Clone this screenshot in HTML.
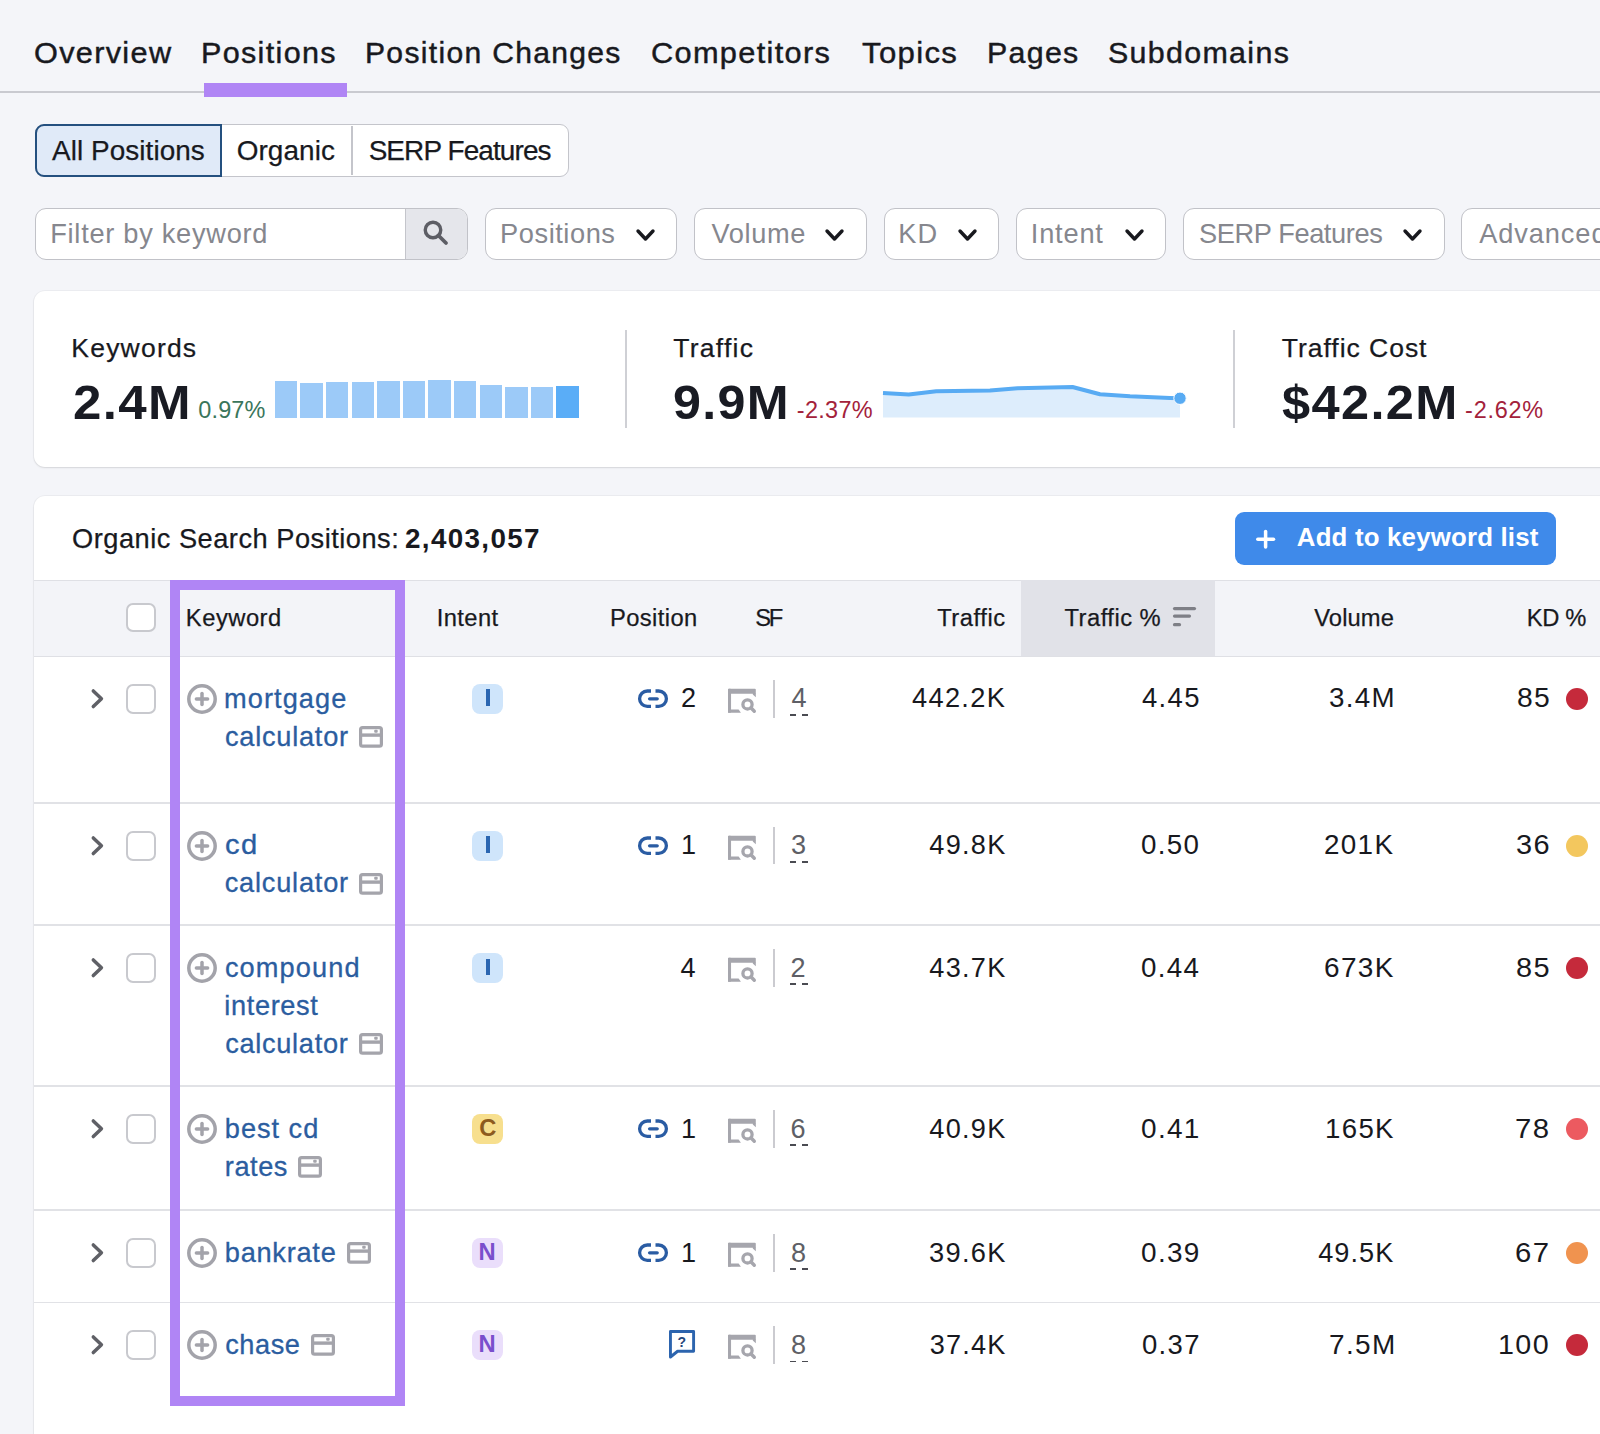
<!DOCTYPE html>
<html><head><meta charset="utf-8"><style>
html,body{margin:0;padding:0}
body{width:1600px;height:1434px;overflow:hidden;position:relative;background:#f4f5f9;font-family:"Liberation Sans",sans-serif}
.a{position:absolute;display:block}
.t{position:absolute;white-space:pre;line-height:normal}
</style></head><body>
<div class="a" style="left:0;top:91px;width:1600px;height:2px;background:#c9cad0"></div>
<div class="a" style="left:204px;top:83px;width:143px;height:14px;background:#b085f5"></div>
<div class="a" style="left:34.5px;top:124.2px;width:534.5px;height:52.6px;border:1.6px solid #c4c5cb;border-radius:9px;background:#fff;box-sizing:border-box"></div>
<div class="a" style="left:34.5px;top:124.2px;width:187.5px;height:52.6px;border:2px solid #24507f;border-radius:9px 0 0 9px;background:#e0eaf8;box-sizing:border-box"></div>
<div class="a" style="left:351.3px;top:125.5px;width:1.6px;height:49.5px;background:#c4c5cb"></div>
<div class="a" style="left:35px;top:208.3px;width:433px;height:52px;border:1.6px solid #c1c2c8;border-radius:11px;background:#fff;box-sizing:border-box;overflow:hidden"><div style="position:absolute;left:369px;top:0;width:70px;height:100%;background:#e5e6eb;border-left:1.5px solid #c4c5cb"></div></div>
<svg class="a" style="left:419.5px;top:217.3px" width="32" height="32" viewBox="0 0 32 32"><circle cx="13" cy="13" r="7.75" fill="none" stroke="#5d5e65" stroke-width="3.4"/><line x1="18.5" y1="18.5" x2="26" y2="26" stroke="#5d5e65" stroke-width="3.8" stroke-linecap="round"/></svg>
<div class="a" style="left:484.7px;top:208.3px;width:192.50000000000006px;height:52px;border:1.6px solid #c1c2c8;border-radius:11px;background:#fff;box-sizing:border-box"></div>
<svg class="a" style="left:635.25px;top:227px" width="22" height="17" viewBox="0 0 22 17"><polyline points="3,4 10.5,12 18,4" fill="none" stroke="#18191e" stroke-width="3.4" stroke-linecap="round" stroke-linejoin="round"/></svg>
<div class="a" style="left:694px;top:208.3px;width:172.60000000000002px;height:52px;border:1.6px solid #c1c2c8;border-radius:11px;background:#fff;box-sizing:border-box"></div>
<svg class="a" style="left:824.25px;top:227px" width="22" height="17" viewBox="0 0 22 17"><polyline points="3,4 10.5,12 18,4" fill="none" stroke="#18191e" stroke-width="3.4" stroke-linecap="round" stroke-linejoin="round"/></svg>
<div class="a" style="left:883.7px;top:208.3px;width:115.5px;height:52px;border:1.6px solid #c1c2c8;border-radius:11px;background:#fff;box-sizing:border-box"></div>
<svg class="a" style="left:956.6px;top:227px" width="22" height="17" viewBox="0 0 22 17"><polyline points="3,4 10.5,12 18,4" fill="none" stroke="#18191e" stroke-width="3.4" stroke-linecap="round" stroke-linejoin="round"/></svg>
<div class="a" style="left:1015.75px;top:208.3px;width:149.95000000000005px;height:52px;border:1.6px solid #c1c2c8;border-radius:11px;background:#fff;box-sizing:border-box"></div>
<svg class="a" style="left:1123.9px;top:227px" width="22" height="17" viewBox="0 0 22 17"><polyline points="3,4 10.5,12 18,4" fill="none" stroke="#18191e" stroke-width="3.4" stroke-linecap="round" stroke-linejoin="round"/></svg>
<div class="a" style="left:1182.6px;top:208.3px;width:262.4000000000001px;height:52px;border:1.6px solid #c1c2c8;border-radius:11px;background:#fff;box-sizing:border-box"></div>
<svg class="a" style="left:1402px;top:227px" width="22" height="17" viewBox="0 0 22 17"><polyline points="3,4 10.5,12 18,4" fill="none" stroke="#18191e" stroke-width="3.4" stroke-linecap="round" stroke-linejoin="round"/></svg>
<div class="a" style="left:1461.2px;top:208.3px;width:238.79999999999995px;height:52px;border:1.6px solid #c1c2c8;border-radius:11px;background:#fff;box-sizing:border-box"></div>
<div class="a" style="left:34px;top:291px;width:1600px;height:176px;background:#fff;border-radius:11px;box-shadow:0 1px 2px rgba(0,0,0,0.10),0 0 0 1px rgba(0,0,0,0.03)"></div>
<div class="a" style="left:274.5px;top:381.25px;width:22.5px;height:36.25px;background:#9ccaf8"></div>
<div class="a" style="left:300px;top:382.5px;width:22.5px;height:35.0px;background:#9ccaf8"></div>
<div class="a" style="left:325.75px;top:382px;width:22.5px;height:35.5px;background:#9ccaf8"></div>
<div class="a" style="left:351.5px;top:381.5px;width:22.5px;height:36.0px;background:#9ccaf8"></div>
<div class="a" style="left:377px;top:381px;width:22.5px;height:36.5px;background:#9ccaf8"></div>
<div class="a" style="left:402.75px;top:380.75px;width:22.5px;height:36.75px;background:#9ccaf8"></div>
<div class="a" style="left:428.25px;top:380px;width:22.5px;height:37.5px;background:#9ccaf8"></div>
<div class="a" style="left:453.75px;top:380.5px;width:22.5px;height:37.0px;background:#9ccaf8"></div>
<div class="a" style="left:479.5px;top:384.75px;width:22.5px;height:32.75px;background:#9ccaf8"></div>
<div class="a" style="left:505px;top:386.5px;width:22.5px;height:31.0px;background:#9ccaf8"></div>
<div class="a" style="left:530.75px;top:386.5px;width:22.5px;height:31.0px;background:#9ccaf8"></div>
<div class="a" style="left:556.25px;top:386px;width:22.5px;height:31.5px;background:#5aadf7"></div>
<div class="a" style="left:624.5px;top:329.5px;width:2px;height:98px;background:#cfd0d5"></div>
<div class="a" style="left:1233.3px;top:330px;width:2px;height:98px;background:#cfd0d5"></div>
<svg class="a" style="left:870px;top:370px" width="330" height="60" viewBox="0 0 330 60"><polygon points="13,23 38.75,24.5 66.25,21.25 120,20.5 147.5,18.25 202.5,17 230,24.25 260,26.25 300,28 310,28.25 310,47.5 13,47.5" fill="#ddedfc"/><polyline points="13,23 38.75,24.5 66.25,21.25 120,20.5 147.5,18.25 202.5,17 230,24.25 260,26.25 300,28 310,28.25" fill="none" stroke="#58abf3" stroke-width="4.2" stroke-linejoin="round"/><circle cx="310" cy="28.25" r="6.2" fill="#58abf3" stroke="#fff" stroke-width="1"/></svg>
<div class="a" style="left:33.5px;top:496px;width:1600px;height:1000px;background:#fff;border-radius:11px;box-shadow:0 1px 2px rgba(0,0,0,0.08),0 0 0 1px rgba(0,0,0,0.035)"></div>
<div class="a" style="left:1235.4px;top:512.4px;width:320.2px;height:52.4px;background:#3f8aea;border-radius:9px"></div>
<svg class="a" style="left:1254px;top:528px" width="23" height="23" viewBox="0 0 23 23"><line x1="11.6" y1="3.4" x2="11.6" y2="19.1" stroke="#fff" stroke-width="3.5" stroke-linecap="round"/><line x1="3.8" y1="11.3" x2="19.5" y2="11.3" stroke="#fff" stroke-width="3.5" stroke-linecap="round"/></svg>
<div class="a" style="left:34px;top:579.5px;width:1600px;height:77px;background:#f3f4f8;border-top:1.5px solid #dfe0e5;border-bottom:1.5px solid #dfe0e5;box-sizing:border-box"></div>
<div class="a" style="left:1021.2px;top:579.5px;width:193.6px;height:76px;background:#e1e2e8"></div>
<svg class="a" style="left:1170px;top:604px" width="30" height="26" viewBox="0 0 30 26"><line x1="4.5" y1="4.6" x2="24.5" y2="4.6" stroke="#7e7f86" stroke-width="3.2" stroke-linecap="round"/><line x1="4.5" y1="12.1" x2="19.5" y2="12.1" stroke="#7e7f86" stroke-width="3.2" stroke-linecap="round"/><line x1="4.5" y1="20.7" x2="9.5" y2="20.7" stroke="#7e7f86" stroke-width="3.2" stroke-linecap="round"/></svg>
<div class="a" style="left:126.3px;top:602.5px;width:29.9px;height:29.9px;border:2px solid #c8c9ce;border-radius:7px;background:#fff;box-sizing:border-box"></div>
<div class="a" style="left:34px;top:802.05px;width:1600px;height:1.5px;background:#e1e2e6"></div>
<svg class="a" style="left:88px;top:686px" width="20" height="26" viewBox="0 0 20 26"><polyline points="5.3,4.9 13.45,12.65 5.3,20.6" fill="none" stroke="#5f6066" stroke-width="3.5" stroke-linecap="round" stroke-linejoin="round"/></svg>
<div class="a" style="left:126px;top:683.9px;width:29.9px;height:29.9px;border:2px solid #c8c9ce;border-radius:7px;background:#fff;box-sizing:border-box"></div>
<svg class="a" style="left:186.87px;top:683.8px" width="30" height="30" viewBox="0 0 30 30"><circle cx="15" cy="15" r="13.2" fill="none" stroke="#a3a3aa" stroke-width="3.5"/><line x1="15" y1="9.4" x2="15" y2="20.6" stroke="#a3a3aa" stroke-width="3.5" stroke-linecap="round"/><line x1="9.4" y1="15" x2="20.6" y2="15" stroke="#a3a3aa" stroke-width="3.5" stroke-linecap="round"/></svg>
<svg class="a" style="left:359.3px;top:726.0px" width="24" height="22" viewBox="0 0 24 22"><rect x="1.6" y="1.6" width="20.8" height="18.6" rx="2" fill="none" stroke="#a4a4ab" stroke-width="3.2"/><rect x="1" y="7.4" width="22" height="3.4" fill="#a4a4ab"/><rect x="15.2" y="3.8" width="3.5" height="3" rx="1" fill="#a4a4ab"/></svg>
<div class="a" style="left:472.3px;top:683.7px;width:30.5px;height:30px;background:#cfe5fb;border-radius:8px"></div>
<div class="a" style="left:486.3px;top:689.4px;width:3.5px;height:16.7px;background:#2b66b1"></div>
<svg class="a" style="left:634px;top:684px" width="40" height="30" viewBox="0 0 40 30"><path d="M17 7 H13.3 A7.7 7.7 0 0 0 13.3 22.4 H17 M21.5 7 H24.7 A7.7 7.7 0 0 1 24.7 22.4 H21.5" fill="none" stroke="#2a5ca3" stroke-width="3.3"/><line x1="15.6" y1="14.8" x2="23.2" y2="14.8" stroke="#2a5ca3" stroke-width="3.3" stroke-linecap="round"/></svg>
<svg class="a" style="left:722px;top:682px" width="40" height="36" viewBox="0 0 40 36"><rect x="6" y="6.65" width="27.8" height="5.2" rx="1" fill="#a6a6ad"/><rect x="6" y="6.65" width="3.05" height="24.15" rx="0.8" fill="#a6a6ad"/><polygon points="6,27.6 16.6,27.6 18.9,30.8 6,30.8" fill="#a6a6ad"/><polygon points="30.8,11 33.8,11 33.8,15.2 30.8,12.6" fill="#a6a6ad"/><circle cx="25.5" cy="22.4" r="4.6" fill="none" stroke="#a6a6ad" stroke-width="3.3"/><line x1="28.9" y1="25.8" x2="32.3" y2="29.3" stroke="#a6a6ad" stroke-width="3.4" stroke-linecap="round"/></svg>
<div class="a" style="left:773.15px;top:680px;width:1.9px;height:37.7px;background:#cbcbd0"></div>
<div class="a" style="left:790.4px;top:714.2px;width:5.4px;height:1.8px;background:#4a4b52"></div>
<div class="a" style="left:802.1px;top:714.2px;width:5.6px;height:1.8px;background:#4a4b52"></div>
<div class="a" style="left:1566px;top:688px;width:22px;height:22px;border-radius:50%;background:#c52a3b"></div>
<div class="a" style="left:34px;top:924.45px;width:1600px;height:1.5px;background:#e1e2e6"></div>
<svg class="a" style="left:88px;top:832.8px" width="20" height="26" viewBox="0 0 20 26"><polyline points="5.3,4.9 13.45,12.65 5.3,20.6" fill="none" stroke="#5f6066" stroke-width="3.5" stroke-linecap="round" stroke-linejoin="round"/></svg>
<div class="a" style="left:126px;top:830.6999999999999px;width:29.9px;height:29.9px;border:2px solid #c8c9ce;border-radius:7px;background:#fff;box-sizing:border-box"></div>
<svg class="a" style="left:186.87px;top:830.5999999999999px" width="30" height="30" viewBox="0 0 30 30"><circle cx="15" cy="15" r="13.2" fill="none" stroke="#a3a3aa" stroke-width="3.5"/><line x1="15" y1="9.4" x2="15" y2="20.6" stroke="#a3a3aa" stroke-width="3.5" stroke-linecap="round"/><line x1="9.4" y1="15" x2="20.6" y2="15" stroke="#a3a3aa" stroke-width="3.5" stroke-linecap="round"/></svg>
<svg class="a" style="left:359.0px;top:872.8px" width="24" height="22" viewBox="0 0 24 22"><rect x="1.6" y="1.6" width="20.8" height="18.6" rx="2" fill="none" stroke="#a4a4ab" stroke-width="3.2"/><rect x="1" y="7.4" width="22" height="3.4" fill="#a4a4ab"/><rect x="15.2" y="3.8" width="3.5" height="3" rx="1" fill="#a4a4ab"/></svg>
<div class="a" style="left:472.3px;top:830.5px;width:30.5px;height:30px;background:#cfe5fb;border-radius:8px"></div>
<div class="a" style="left:486.3px;top:836.1999999999999px;width:3.5px;height:16.7px;background:#2b66b1"></div>
<svg class="a" style="left:634px;top:830.8px" width="40" height="30" viewBox="0 0 40 30"><path d="M17 7 H13.3 A7.7 7.7 0 0 0 13.3 22.4 H17 M21.5 7 H24.7 A7.7 7.7 0 0 1 24.7 22.4 H21.5" fill="none" stroke="#2a5ca3" stroke-width="3.3"/><line x1="15.6" y1="14.8" x2="23.2" y2="14.8" stroke="#2a5ca3" stroke-width="3.3" stroke-linecap="round"/></svg>
<svg class="a" style="left:722px;top:828.8px" width="40" height="36" viewBox="0 0 40 36"><rect x="6" y="6.65" width="27.8" height="5.2" rx="1" fill="#a6a6ad"/><rect x="6" y="6.65" width="3.05" height="24.15" rx="0.8" fill="#a6a6ad"/><polygon points="6,27.6 16.6,27.6 18.9,30.8 6,30.8" fill="#a6a6ad"/><polygon points="30.8,11 33.8,11 33.8,15.2 30.8,12.6" fill="#a6a6ad"/><circle cx="25.5" cy="22.4" r="4.6" fill="none" stroke="#a6a6ad" stroke-width="3.3"/><line x1="28.9" y1="25.8" x2="32.3" y2="29.3" stroke="#a6a6ad" stroke-width="3.4" stroke-linecap="round"/></svg>
<div class="a" style="left:773.15px;top:826.8px;width:1.9px;height:37.7px;background:#cbcbd0"></div>
<div class="a" style="left:790.4px;top:861.0px;width:5.4px;height:1.8px;background:#4a4b52"></div>
<div class="a" style="left:802.1px;top:861.0px;width:5.6px;height:1.8px;background:#4a4b52"></div>
<div class="a" style="left:1566px;top:834.8px;width:22px;height:22px;border-radius:50%;background:#f3c75e"></div>
<div class="a" style="left:34px;top:1085.45px;width:1600px;height:1.5px;background:#e1e2e6"></div>
<svg class="a" style="left:88px;top:955.2px" width="20" height="26" viewBox="0 0 20 26"><polyline points="5.3,4.9 13.45,12.65 5.3,20.6" fill="none" stroke="#5f6066" stroke-width="3.5" stroke-linecap="round" stroke-linejoin="round"/></svg>
<div class="a" style="left:126px;top:953.1px;width:29.9px;height:29.9px;border:2px solid #c8c9ce;border-radius:7px;background:#fff;box-sizing:border-box"></div>
<svg class="a" style="left:186.87px;top:953.0px" width="30" height="30" viewBox="0 0 30 30"><circle cx="15" cy="15" r="13.2" fill="none" stroke="#a3a3aa" stroke-width="3.5"/><line x1="15" y1="9.4" x2="15" y2="20.6" stroke="#a3a3aa" stroke-width="3.5" stroke-linecap="round"/><line x1="9.4" y1="15" x2="20.6" y2="15" stroke="#a3a3aa" stroke-width="3.5" stroke-linecap="round"/></svg>
<svg class="a" style="left:359.25px;top:1033.2px" width="24" height="22" viewBox="0 0 24 22"><rect x="1.6" y="1.6" width="20.8" height="18.6" rx="2" fill="none" stroke="#a4a4ab" stroke-width="3.2"/><rect x="1" y="7.4" width="22" height="3.4" fill="#a4a4ab"/><rect x="15.2" y="3.8" width="3.5" height="3" rx="1" fill="#a4a4ab"/></svg>
<div class="a" style="left:472.3px;top:952.9000000000001px;width:30.5px;height:30px;background:#cfe5fb;border-radius:8px"></div>
<div class="a" style="left:486.3px;top:958.6px;width:3.5px;height:16.7px;background:#2b66b1"></div>
<svg class="a" style="left:722px;top:951.2px" width="40" height="36" viewBox="0 0 40 36"><rect x="6" y="6.65" width="27.8" height="5.2" rx="1" fill="#a6a6ad"/><rect x="6" y="6.65" width="3.05" height="24.15" rx="0.8" fill="#a6a6ad"/><polygon points="6,27.6 16.6,27.6 18.9,30.8 6,30.8" fill="#a6a6ad"/><polygon points="30.8,11 33.8,11 33.8,15.2 30.8,12.6" fill="#a6a6ad"/><circle cx="25.5" cy="22.4" r="4.6" fill="none" stroke="#a6a6ad" stroke-width="3.3"/><line x1="28.9" y1="25.8" x2="32.3" y2="29.3" stroke="#a6a6ad" stroke-width="3.4" stroke-linecap="round"/></svg>
<div class="a" style="left:773.15px;top:949.2px;width:1.9px;height:37.7px;background:#cbcbd0"></div>
<div class="a" style="left:790.4px;top:983.4000000000001px;width:5.4px;height:1.8px;background:#4a4b52"></div>
<div class="a" style="left:802.1px;top:983.4000000000001px;width:5.6px;height:1.8px;background:#4a4b52"></div>
<div class="a" style="left:1566px;top:957.2px;width:22px;height:22px;border-radius:50%;background:#c52a3b"></div>
<div class="a" style="left:34px;top:1209.45px;width:1600px;height:1.5px;background:#e1e2e6"></div>
<svg class="a" style="left:88px;top:1116.2px" width="20" height="26" viewBox="0 0 20 26"><polyline points="5.3,4.9 13.45,12.65 5.3,20.6" fill="none" stroke="#5f6066" stroke-width="3.5" stroke-linecap="round" stroke-linejoin="round"/></svg>
<div class="a" style="left:126px;top:1114.1000000000001px;width:29.9px;height:29.9px;border:2px solid #c8c9ce;border-radius:7px;background:#fff;box-sizing:border-box"></div>
<svg class="a" style="left:186.87px;top:1114.0px" width="30" height="30" viewBox="0 0 30 30"><circle cx="15" cy="15" r="13.2" fill="none" stroke="#a3a3aa" stroke-width="3.5"/><line x1="15" y1="9.4" x2="15" y2="20.6" stroke="#a3a3aa" stroke-width="3.5" stroke-linecap="round"/><line x1="9.4" y1="15" x2="20.6" y2="15" stroke="#a3a3aa" stroke-width="3.5" stroke-linecap="round"/></svg>
<svg class="a" style="left:298.2px;top:1156.2px" width="24" height="22" viewBox="0 0 24 22"><rect x="1.6" y="1.6" width="20.8" height="18.6" rx="2" fill="none" stroke="#a4a4ab" stroke-width="3.2"/><rect x="1" y="7.4" width="22" height="3.4" fill="#a4a4ab"/><rect x="15.2" y="3.8" width="3.5" height="3" rx="1" fill="#a4a4ab"/></svg>
<div class="a" style="left:472.3px;top:1113.9px;width:30.5px;height:30px;background:#f7df8e;border-radius:8px"></div>
<svg class="a" style="left:634px;top:1114.2px" width="40" height="30" viewBox="0 0 40 30"><path d="M17 7 H13.3 A7.7 7.7 0 0 0 13.3 22.4 H17 M21.5 7 H24.7 A7.7 7.7 0 0 1 24.7 22.4 H21.5" fill="none" stroke="#2a5ca3" stroke-width="3.3"/><line x1="15.6" y1="14.8" x2="23.2" y2="14.8" stroke="#2a5ca3" stroke-width="3.3" stroke-linecap="round"/></svg>
<svg class="a" style="left:722px;top:1112.2px" width="40" height="36" viewBox="0 0 40 36"><rect x="6" y="6.65" width="27.8" height="5.2" rx="1" fill="#a6a6ad"/><rect x="6" y="6.65" width="3.05" height="24.15" rx="0.8" fill="#a6a6ad"/><polygon points="6,27.6 16.6,27.6 18.9,30.8 6,30.8" fill="#a6a6ad"/><polygon points="30.8,11 33.8,11 33.8,15.2 30.8,12.6" fill="#a6a6ad"/><circle cx="25.5" cy="22.4" r="4.6" fill="none" stroke="#a6a6ad" stroke-width="3.3"/><line x1="28.9" y1="25.8" x2="32.3" y2="29.3" stroke="#a6a6ad" stroke-width="3.4" stroke-linecap="round"/></svg>
<div class="a" style="left:773.15px;top:1110.2px;width:1.9px;height:37.7px;background:#cbcbd0"></div>
<div class="a" style="left:790.4px;top:1144.4px;width:5.4px;height:1.8px;background:#4a4b52"></div>
<div class="a" style="left:802.1px;top:1144.4px;width:5.6px;height:1.8px;background:#4a4b52"></div>
<div class="a" style="left:1566px;top:1118.2px;width:22px;height:22px;border-radius:50%;background:#ec5a60"></div>
<div class="a" style="left:34px;top:1301.55px;width:1600px;height:1.5px;background:#e1e2e6"></div>
<svg class="a" style="left:88px;top:1240.2px" width="20" height="26" viewBox="0 0 20 26"><polyline points="5.3,4.9 13.45,12.65 5.3,20.6" fill="none" stroke="#5f6066" stroke-width="3.5" stroke-linecap="round" stroke-linejoin="round"/></svg>
<div class="a" style="left:126px;top:1238.1000000000001px;width:29.9px;height:29.9px;border:2px solid #c8c9ce;border-radius:7px;background:#fff;box-sizing:border-box"></div>
<svg class="a" style="left:186.87px;top:1238.0px" width="30" height="30" viewBox="0 0 30 30"><circle cx="15" cy="15" r="13.2" fill="none" stroke="#a3a3aa" stroke-width="3.5"/><line x1="15" y1="9.4" x2="15" y2="20.6" stroke="#a3a3aa" stroke-width="3.5" stroke-linecap="round"/><line x1="9.4" y1="15" x2="20.6" y2="15" stroke="#a3a3aa" stroke-width="3.5" stroke-linecap="round"/></svg>
<svg class="a" style="left:347px;top:1242.2px" width="24" height="22" viewBox="0 0 24 22"><rect x="1.6" y="1.6" width="20.8" height="18.6" rx="2" fill="none" stroke="#a4a4ab" stroke-width="3.2"/><rect x="1" y="7.4" width="22" height="3.4" fill="#a4a4ab"/><rect x="15.2" y="3.8" width="3.5" height="3" rx="1" fill="#a4a4ab"/></svg>
<div class="a" style="left:472.3px;top:1237.9px;width:30.5px;height:30px;background:#eadefb;border-radius:8px"></div>
<svg class="a" style="left:634px;top:1238.2px" width="40" height="30" viewBox="0 0 40 30"><path d="M17 7 H13.3 A7.7 7.7 0 0 0 13.3 22.4 H17 M21.5 7 H24.7 A7.7 7.7 0 0 1 24.7 22.4 H21.5" fill="none" stroke="#2a5ca3" stroke-width="3.3"/><line x1="15.6" y1="14.8" x2="23.2" y2="14.8" stroke="#2a5ca3" stroke-width="3.3" stroke-linecap="round"/></svg>
<svg class="a" style="left:722px;top:1236.2px" width="40" height="36" viewBox="0 0 40 36"><rect x="6" y="6.65" width="27.8" height="5.2" rx="1" fill="#a6a6ad"/><rect x="6" y="6.65" width="3.05" height="24.15" rx="0.8" fill="#a6a6ad"/><polygon points="6,27.6 16.6,27.6 18.9,30.8 6,30.8" fill="#a6a6ad"/><polygon points="30.8,11 33.8,11 33.8,15.2 30.8,12.6" fill="#a6a6ad"/><circle cx="25.5" cy="22.4" r="4.6" fill="none" stroke="#a6a6ad" stroke-width="3.3"/><line x1="28.9" y1="25.8" x2="32.3" y2="29.3" stroke="#a6a6ad" stroke-width="3.4" stroke-linecap="round"/></svg>
<div class="a" style="left:773.15px;top:1234.2px;width:1.9px;height:37.7px;background:#cbcbd0"></div>
<div class="a" style="left:790.4px;top:1268.4px;width:5.4px;height:1.8px;background:#4a4b52"></div>
<div class="a" style="left:802.1px;top:1268.4px;width:5.6px;height:1.8px;background:#4a4b52"></div>
<div class="a" style="left:1566px;top:1242.2px;width:22px;height:22px;border-radius:50%;background:#f0934f"></div>
<svg class="a" style="left:88px;top:1332.3px" width="20" height="26" viewBox="0 0 20 26"><polyline points="5.3,4.9 13.45,12.65 5.3,20.6" fill="none" stroke="#5f6066" stroke-width="3.5" stroke-linecap="round" stroke-linejoin="round"/></svg>
<div class="a" style="left:126px;top:1330.2px;width:29.9px;height:29.9px;border:2px solid #c8c9ce;border-radius:7px;background:#fff;box-sizing:border-box"></div>
<svg class="a" style="left:186.87px;top:1330.1px" width="30" height="30" viewBox="0 0 30 30"><circle cx="15" cy="15" r="13.2" fill="none" stroke="#a3a3aa" stroke-width="3.5"/><line x1="15" y1="9.4" x2="15" y2="20.6" stroke="#a3a3aa" stroke-width="3.5" stroke-linecap="round"/><line x1="9.4" y1="15" x2="20.6" y2="15" stroke="#a3a3aa" stroke-width="3.5" stroke-linecap="round"/></svg>
<svg class="a" style="left:310.6px;top:1334.3px" width="24" height="22" viewBox="0 0 24 22"><rect x="1.6" y="1.6" width="20.8" height="18.6" rx="2" fill="none" stroke="#a4a4ab" stroke-width="3.2"/><rect x="1" y="7.4" width="22" height="3.4" fill="#a4a4ab"/><rect x="15.2" y="3.8" width="3.5" height="3" rx="1" fill="#a4a4ab"/></svg>
<div class="a" style="left:472.3px;top:1330.0px;width:30.5px;height:30px;background:#eadefb;border-radius:8px"></div>
<svg class="a" style="left:662px;top:1324.0px" width="40" height="40" viewBox="0 0 40 40"><path d="M8.45 33 V7.45 H31.6 V27.25 H15.6 Z" fill="none" stroke="#2c64ae" stroke-width="2.9" stroke-linejoin="round"/><text x="19.9" y="23.1" font-family="Liberation Sans" font-weight="bold" font-size="14" fill="#26477d" text-anchor="middle">?</text></svg>
<svg class="a" style="left:722px;top:1328.3px" width="40" height="36" viewBox="0 0 40 36"><rect x="6" y="6.65" width="27.8" height="5.2" rx="1" fill="#a6a6ad"/><rect x="6" y="6.65" width="3.05" height="24.15" rx="0.8" fill="#a6a6ad"/><polygon points="6,27.6 16.6,27.6 18.9,30.8 6,30.8" fill="#a6a6ad"/><polygon points="30.8,11 33.8,11 33.8,15.2 30.8,12.6" fill="#a6a6ad"/><circle cx="25.5" cy="22.4" r="4.6" fill="none" stroke="#a6a6ad" stroke-width="3.3"/><line x1="28.9" y1="25.8" x2="32.3" y2="29.3" stroke="#a6a6ad" stroke-width="3.4" stroke-linecap="round"/></svg>
<div class="a" style="left:773.15px;top:1326.3px;width:1.9px;height:37.7px;background:#cbcbd0"></div>
<div class="a" style="left:790.4px;top:1360.5px;width:5.4px;height:1.8px;background:#4a4b52"></div>
<div class="a" style="left:802.1px;top:1360.5px;width:5.6px;height:1.8px;background:#4a4b52"></div>
<div class="a" style="left:1566px;top:1334.3px;width:22px;height:22px;border-radius:50%;background:#c52a3b"></div>
<div class="a" style="left:170.3px;top:580.2px;width:235.2px;height:826.1px;border:10px solid #b085f5;box-sizing:border-box"></div>
<span class="t" style="left:33.56px;top:36.12px;font-size:30.03px;letter-spacing:1.300px;color:#18191e;transform:scaleX(1.0210);transform-origin:0 0;-webkit-text-stroke:0.45px #18191e;">Overview</span>
<span class="t" style="left:201.36px;top:36.12px;font-size:30.03px;letter-spacing:1.300px;color:#18191e;transform:scaleX(1.0178);transform-origin:0 0;-webkit-text-stroke:0.45px #18191e;">Positions</span>
<span class="t" style="left:365.15px;top:36.12px;font-size:30.03px;letter-spacing:1.300px;color:#18191e;transform:scaleX(1.0024);transform-origin:0 0;-webkit-text-stroke:0.45px #18191e;">Position Changes</span>
<span class="t" style="left:651.06px;top:36.12px;font-size:30.03px;letter-spacing:1.300px;color:#18191e;transform:scaleX(1.0230);transform-origin:0 0;-webkit-text-stroke:0.45px #18191e;">Competitors</span>
<span class="t" style="left:862.01px;top:36.12px;font-size:30.03px;letter-spacing:1.300px;color:#18191e;transform:scaleX(1.0365);transform-origin:0 0;-webkit-text-stroke:0.45px #18191e;">Topics</span>
<span class="t" style="left:986.63px;top:36.12px;font-size:30.03px;letter-spacing:1.300px;color:#18191e;transform:scaleX(1.0108);transform-origin:0 0;-webkit-text-stroke:0.45px #18191e;">Pages</span>
<span class="t" style="left:1108.05px;top:36.12px;font-size:30.03px;letter-spacing:1.300px;color:#18191e;transform:scaleX(1.0127);transform-origin:0 0;-webkit-text-stroke:0.45px #18191e;">Subdomains</span>
<span class="t" style="left:52.00px;top:134.72px;font-size:27.93px;letter-spacing:0.061px;color:#18191e;-webkit-text-stroke:0.25px #18191e;">All Positions</span>
<span class="t" style="left:236.69px;top:134.72px;font-size:27.93px;letter-spacing:0.073px;color:#18191e;-webkit-text-stroke:0.25px #18191e;">Organic</span>
<span class="t" style="left:368.63px;top:134.72px;font-size:27.93px;letter-spacing:-0.880px;color:#18191e;-webkit-text-stroke:0.25px #18191e;">SERP Features</span>
<span class="t" style="left:50.27px;top:217.95px;font-size:27.23px;letter-spacing:0.714px;color:#86878e;">Filter by keyword</span>
<span class="t" style="left:500.07px;top:217.95px;font-size:27.23px;letter-spacing:0.559px;color:#86878e;">Positions</span>
<span class="t" style="left:711.50px;top:217.95px;font-size:27.23px;letter-spacing:0.613px;color:#86878e;">Volume</span>
<span class="t" style="left:898.37px;top:217.95px;font-size:27.23px;letter-spacing:0.939px;color:#86878e;">KD</span>
<span class="t" style="left:1030.87px;top:217.95px;font-size:27.23px;letter-spacing:0.779px;color:#86878e;">Intent</span>
<span class="t" style="left:1199.05px;top:217.95px;font-size:27.23px;letter-spacing:-0.409px;color:#86878e;">SERP Features</span>
<span class="t" style="left:1479.20px;top:217.95px;font-size:27.23px;letter-spacing:0.900px;color:#86878e;">Advanced</span>
<span class="t" style="left:71.33px;top:332.98px;font-size:26.54px;letter-spacing:1.184px;color:#18191e;-webkit-text-stroke:0.25px #18191e;">Keywords</span>
<span class="t" style="left:72.80px;top:374.16px;font-size:48.88px;letter-spacing:1.300px;color:#191b23;transform:scaleX(1.0450);transform-origin:0 0;font-weight:bold;">2.4M</span>
<span class="t" style="left:198.27px;top:396.57px;font-size:23.46px;letter-spacing:0.151px;color:#3a765b;">0.97%</span>
<span class="t" style="left:673.34px;top:332.98px;font-size:26.54px;letter-spacing:1.222px;color:#18191e;-webkit-text-stroke:0.25px #18191e;">Traffic</span>
<span class="t" style="left:672.93px;top:374.16px;font-size:48.88px;letter-spacing:1.300px;color:#191b23;transform:scaleX(1.0275);transform-origin:0 0;font-weight:bold;">9.9M</span>
<span class="t" style="left:796.77px;top:396.57px;font-size:23.46px;letter-spacing:0.318px;color:#a3223b;">-2.37%</span>
<span class="t" style="left:1281.79px;top:332.98px;font-size:26.54px;letter-spacing:0.958px;color:#18191e;-webkit-text-stroke:0.25px #18191e;">Traffic Cost</span>
<span class="t" style="left:1282.20px;top:374.16px;font-size:48.88px;letter-spacing:1.300px;color:#191b23;transform:scaleX(1.0346);transform-origin:0 0;font-weight:bold;">$42.2M</span>
<span class="t" style="left:1465.07px;top:396.57px;font-size:23.46px;letter-spacing:0.758px;color:#a3223b;">-2.62%</span>
<span class="t" style="left:72.02px;top:522.85px;font-size:27.23px;letter-spacing:0.503px;color:#18191e;-webkit-text-stroke:0.25px #18191e;">Organic Search Positions:</span>
<span class="t" style="left:404.53px;top:522.85px;font-size:27.23px;letter-spacing:1.300px;color:#18191e;transform:scaleX(1.0231);transform-origin:0 0;font-weight:bold;">2,403,057</span>
<span class="t" style="left:1296.80px;top:522.92px;font-size:25.84px;letter-spacing:0.185px;color:#ffffff;font-weight:bold;">Add to keyword list</span>
<span class="t" style="left:185.85px;top:605.31px;font-size:23.74px;letter-spacing:0.502px;color:#18191e;-webkit-text-stroke:0.25px #18191e;">Keyword</span>
<span class="t" style="left:436.65px;top:605.31px;font-size:23.74px;letter-spacing:0.414px;color:#18191e;-webkit-text-stroke:0.25px #18191e;">Intent</span>
<span class="t" style="left:609.95px;top:605.31px;font-size:23.74px;letter-spacing:0.417px;color:#18191e;-webkit-text-stroke:0.25px #18191e;">Position</span>
<span class="t" style="left:755.36px;top:605.31px;font-size:23.74px;letter-spacing:-2.421px;color:#18191e;-webkit-text-stroke:0.25px #18191e;">SF</span>
<span class="t" style="left:937.13px;top:605.31px;font-size:23.74px;letter-spacing:0.566px;color:#18191e;-webkit-text-stroke:0.25px #18191e;">Traffic</span>
<span class="t" style="left:1064.53px;top:605.31px;font-size:23.74px;letter-spacing:0.478px;color:#18191e;-webkit-text-stroke:0.25px #18191e;">Traffic %</span>
<span class="t" style="left:1314.20px;top:605.31px;font-size:23.74px;letter-spacing:0.114px;color:#18191e;-webkit-text-stroke:0.25px #18191e;">Volume</span>
<span class="t" style="left:1526.85px;top:605.31px;font-size:23.74px;letter-spacing:-0.376px;color:#18191e;-webkit-text-stroke:0.25px #18191e;">KD %</span>
<span class="t" style="left:224.10px;top:682.68px;font-size:27.20px;letter-spacing:1.056px;color:#2b5d9f;-webkit-text-stroke:0.3px #2b5d9f;">mortgage</span>
<span class="t" style="left:224.95px;top:720.68px;font-size:27.20px;letter-spacing:0.753px;color:#2b5d9f;-webkit-text-stroke:0.3px #2b5d9f;">calculator</span>
<span class="t" style="left:681.03px;top:682.47px;font-size:27.10px;letter-spacing:0.000px;color:#18191e;">2</span>
<span class="t" style="left:791.38px;top:682.47px;font-size:27.10px;letter-spacing:0.000px;color:#5e5f66;">4</span>
<span class="t" style="left:912.47px;top:682.47px;font-size:27.10px;letter-spacing:1.300px;color:#18191e;transform:scaleX(1.0046);transform-origin:0 0;">442.2K</span>
<span class="t" style="left:1141.97px;top:682.47px;font-size:27.10px;letter-spacing:1.300px;color:#18191e;transform:scaleX(1.0141);transform-origin:0 0;">4.45</span>
<span class="t" style="left:1329.13px;top:682.47px;font-size:27.10px;letter-spacing:1.300px;color:#18191e;transform:scaleX(1.0248);transform-origin:0 0;">3.4M</span>
<span class="t" style="left:1516.62px;top:682.47px;font-size:27.10px;letter-spacing:1.300px;color:#18191e;transform:scaleX(1.0441);transform-origin:0 0;">85</span>
<span class="t" style="left:224.59px;top:829.48px;font-size:27.20px;letter-spacing:1.300px;color:#2b5d9f;transform:scaleX(1.0741);transform-origin:0 0;-webkit-text-stroke:0.3px #2b5d9f;">cd</span>
<span class="t" style="left:224.65px;top:867.48px;font-size:27.20px;letter-spacing:0.797px;color:#2b5d9f;-webkit-text-stroke:0.3px #2b5d9f;">calculator</span>
<span class="t" style="left:681.03px;top:829.27px;font-size:27.10px;letter-spacing:0.000px;color:#18191e;">1</span>
<span class="t" style="left:790.95px;top:829.27px;font-size:27.10px;letter-spacing:0.000px;color:#5e5f66;">3</span>
<span class="t" style="left:929.28px;top:829.27px;font-size:27.10px;letter-spacing:1.299px;color:#18191e;">49.8K</span>
<span class="t" style="left:1141.03px;top:829.27px;font-size:27.10px;letter-spacing:1.300px;color:#18191e;transform:scaleX(1.0232);transform-origin:0 0;">0.50</span>
<span class="t" style="left:1324.30px;top:829.27px;font-size:27.10px;letter-spacing:1.300px;color:#18191e;transform:scaleX(1.0270);transform-origin:0 0;">201K</span>
<span class="t" style="left:1515.90px;top:829.27px;font-size:27.10px;letter-spacing:1.300px;color:#18191e;transform:scaleX(1.0679);transform-origin:0 0;">36</span>
<span class="t" style="left:224.90px;top:951.88px;font-size:27.20px;letter-spacing:1.115px;color:#2b5d9f;-webkit-text-stroke:0.3px #2b5d9f;">compound</span>
<span class="t" style="left:224.30px;top:989.88px;font-size:27.20px;letter-spacing:0.630px;color:#2b5d9f;-webkit-text-stroke:0.3px #2b5d9f;">interest</span>
<span class="t" style="left:225.15px;top:1027.88px;font-size:27.20px;letter-spacing:0.697px;color:#2b5d9f;-webkit-text-stroke:0.3px #2b5d9f;">calculator</span>
<span class="t" style="left:680.60px;top:951.67px;font-size:27.10px;letter-spacing:0.000px;color:#18191e;">4</span>
<span class="t" style="left:790.53px;top:951.67px;font-size:27.10px;letter-spacing:0.000px;color:#5e5f66;">2</span>
<span class="t" style="left:929.28px;top:951.67px;font-size:27.10px;letter-spacing:1.299px;color:#18191e;">43.7K</span>
<span class="t" style="left:1141.03px;top:951.67px;font-size:27.10px;letter-spacing:1.300px;color:#18191e;transform:scaleX(1.0232);transform-origin:0 0;">0.44</span>
<span class="t" style="left:1323.89px;top:951.67px;font-size:27.10px;letter-spacing:1.300px;color:#18191e;transform:scaleX(1.0331);transform-origin:0 0;">673K</span>
<span class="t" style="left:1515.90px;top:951.67px;font-size:27.10px;letter-spacing:1.300px;color:#18191e;transform:scaleX(1.0679);transform-origin:0 0;">85</span>
<span class="t" style="left:224.80px;top:1112.88px;font-size:27.20px;letter-spacing:0.972px;color:#2b5d9f;-webkit-text-stroke:0.3px #2b5d9f;">best cd</span>
<span class="t" style="left:224.80px;top:1150.88px;font-size:27.20px;letter-spacing:0.545px;color:#2b5d9f;-webkit-text-stroke:0.3px #2b5d9f;">rates</span>
<span class="t" style="left:681.03px;top:1112.67px;font-size:27.10px;letter-spacing:0.000px;color:#18191e;">1</span>
<span class="t" style="left:790.53px;top:1112.67px;font-size:27.10px;letter-spacing:0.000px;color:#5e5f66;">6</span>
<span class="t" style="left:929.28px;top:1112.67px;font-size:27.10px;letter-spacing:1.299px;color:#18191e;">40.9K</span>
<span class="t" style="left:1141.03px;top:1112.67px;font-size:27.10px;letter-spacing:1.300px;color:#18191e;transform:scaleX(1.0311);transform-origin:0 0;">0.41</span>
<span class="t" style="left:1324.77px;top:1112.67px;font-size:27.10px;letter-spacing:1.300px;color:#18191e;transform:scaleX(1.0198);transform-origin:0 0;">165K</span>
<span class="t" style="left:1515.42px;top:1112.67px;font-size:27.10px;letter-spacing:1.300px;color:#18191e;transform:scaleX(1.0834);transform-origin:0 0;">78</span>
<span class="t" style="left:479.26px;top:1115.36px;font-size:23.74px;letter-spacing:0.000px;color:#8d5b1e;font-weight:bold;">C</span>
<span class="t" style="left:224.80px;top:1236.88px;font-size:27.20px;letter-spacing:0.736px;color:#2b5d9f;-webkit-text-stroke:0.3px #2b5d9f;">bankrate</span>
<span class="t" style="left:681.03px;top:1236.67px;font-size:27.10px;letter-spacing:0.000px;color:#18191e;">1</span>
<span class="t" style="left:790.95px;top:1236.67px;font-size:27.10px;letter-spacing:0.000px;color:#5e5f66;">8</span>
<span class="t" style="left:928.85px;top:1236.67px;font-size:27.10px;letter-spacing:1.300px;color:#18191e;transform:scaleX(1.0056);transform-origin:0 0;">39.6K</span>
<span class="t" style="left:1141.03px;top:1236.67px;font-size:27.10px;letter-spacing:1.300px;color:#18191e;transform:scaleX(1.0311);transform-origin:0 0;">0.39</span>
<span class="t" style="left:1318.18px;top:1236.67px;font-size:27.10px;letter-spacing:1.074px;color:#18191e;">49.5K</span>
<span class="t" style="left:1515.42px;top:1236.67px;font-size:27.10px;letter-spacing:1.300px;color:#18191e;transform:scaleX(1.0834);transform-origin:0 0;">67</span>
<span class="t" style="left:478.52px;top:1239.36px;font-size:23.74px;letter-spacing:0.000px;color:#7a4fcc;font-weight:bold;">N</span>
<span class="t" style="left:225.15px;top:1328.98px;font-size:27.20px;letter-spacing:0.568px;color:#2b5d9f;-webkit-text-stroke:0.3px #2b5d9f;">chase</span>
<span class="t" style="left:790.95px;top:1328.77px;font-size:27.10px;letter-spacing:0.000px;color:#5e5f66;">8</span>
<span class="t" style="left:929.75px;top:1328.77px;font-size:27.10px;letter-spacing:1.180px;color:#18191e;">37.4K</span>
<span class="t" style="left:1141.94px;top:1328.77px;font-size:27.10px;letter-spacing:1.300px;color:#18191e;transform:scaleX(1.0146);transform-origin:0 0;">0.37</span>
<span class="t" style="left:1328.69px;top:1328.77px;font-size:27.10px;letter-spacing:1.300px;color:#18191e;transform:scaleX(1.0319);transform-origin:0 0;">7.5M</span>
<span class="t" style="left:1498.41px;top:1328.77px;font-size:27.10px;letter-spacing:1.300px;color:#18191e;transform:scaleX(1.0584);transform-origin:0 0;">100</span>
<span class="t" style="left:478.52px;top:1331.46px;font-size:23.74px;letter-spacing:0.000px;color:#7a4fcc;font-weight:bold;">N</span>
</body></html>
